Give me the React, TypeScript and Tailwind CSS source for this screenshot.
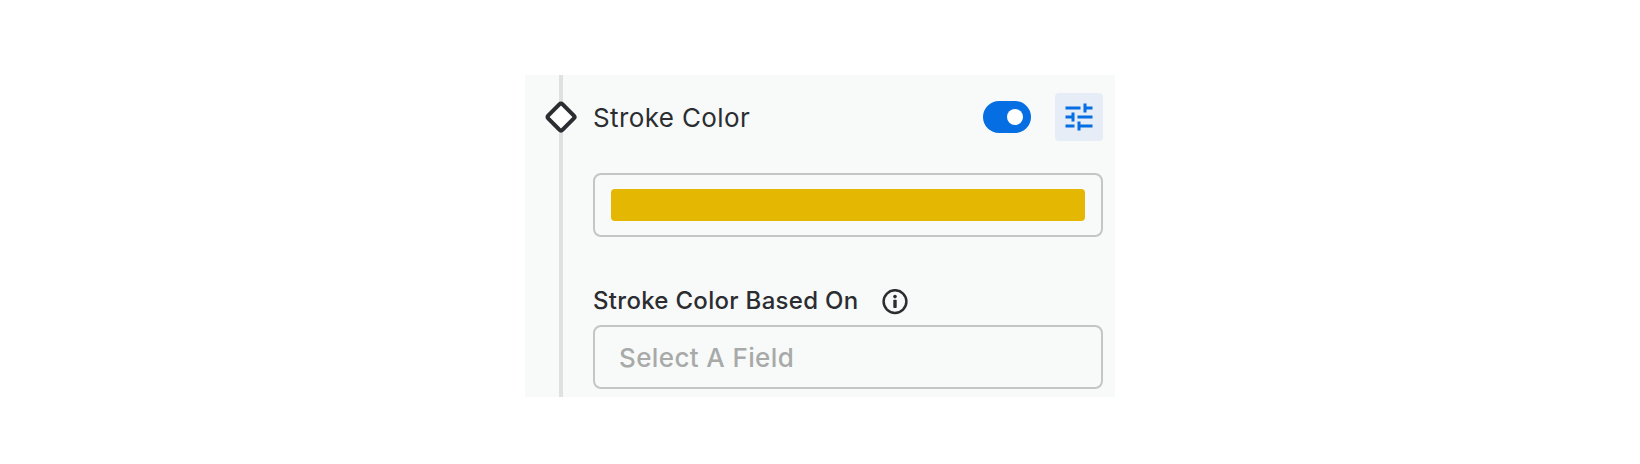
function DiamondIcon() {
  return (
    <svg className="relative size-8" viewBox="0 0 32 32" fill="#fff" stroke="#2b2d31" strokeWidth="4.1">
      <rect x="5.9" y="5.9" width="20.2" height="20.2" rx="2" transform="rotate(45 16 16)" />
    </svg>
  );
}

function TuneIcon() {
  return (
    <svg className="size-9" viewBox="0 0 24 24" fill="#056ee2">
      <path d="M3 17v2h6v-2H3zM3 5v2h10V5H3zm10 16v-2h8v-2h-8v-2h-2v6h2zM7 9v2H3v2h4v2h2V9H7zm14 4v-2H11v2h10zm-6-4h2V7h4V5h-4V3h-2v6z" />
    </svg>
  );
}

function InfoIcon() {
  return (
    <svg className="mt-px size-[26px]" viewBox="0 0 26 26" fill="none">
      <circle cx="13" cy="12.6" r="11.4" stroke="#2b2d31" strokeWidth="2.5" />
      <circle cx="13" cy="7.6" r="1.8" fill="#2b2d31" />
      <rect x="11.3" y="10.8" width="3.4" height="8.2" rx="0.8" fill="#2b2d31" />
    </svg>
  );
}

export default function App() {
  return (
    <div className="flex h-[464px] w-full justify-center bg-white pt-[75px] font-['Inter',sans-serif] text-[#2b2d31]">
      <section className="flex h-[322px] w-[590px] bg-[#f8faf9] pr-3">
        <div className="relative flex w-[72px] justify-center pt-[26px]">
          <div className="absolute inset-y-0 left-[34px] w-1 bg-[#dfe1e0]" />
          <DiamondIcon />
        </div>
        <div className="-ml-1 flex flex-1 flex-col pt-[18px]">
          <div className="flex h-12 items-center">
            <h2 className="flex-1 pt-0.5 text-[26px] leading-8 tracking-[0.38px]">Stroke Color</h2>
            <button role="switch" aria-checked="true" aria-label="Stroke Color" className="flex h-8 w-12 items-center justify-end rounded-full bg-[#056ee2] pr-2">
              <span className="size-4 rounded-full bg-white" />
            </button>
            <button aria-label="Options" className="ml-6 flex size-12 items-center justify-center rounded bg-[#e7edf7]">
              <TuneIcon />
            </button>
          </div>
          <div className="mt-8 h-16 rounded-lg border-2 border-[#c4c6c5] px-4 py-3.5">
            <div className="h-8 rounded bg-[#e3b702]" />
          </div>
          <div className="mt-12 flex h-8 items-center">
            <span className="text-2xl font-medium tracking-[0.3px]">Stroke Color Based On</span>
            <span className="ml-6">
              <InfoIcon />
            </span>
          </div>
          <div className="mt-2 flex h-16 items-center rounded-lg border-2 border-[#c4c6c5] px-6 text-[26px] font-medium tracking-[0.38px] text-[#a8aaa9]">
            Select A Field
          </div>
        </div>
      </section>
    </div>
  );
}
